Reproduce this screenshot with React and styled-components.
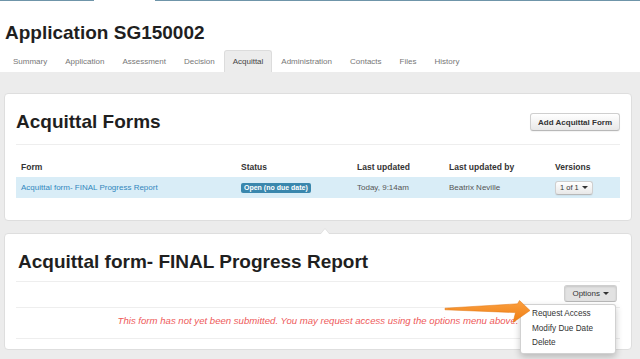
import React from 'react';
import styled, { createGlobalStyle } from 'styled-components';

const tabs = ['Summary', 'Application', 'Assessment', 'Decision', 'Acquittal', 'Administration', 'Contacts', 'Files', 'History'];

const menuItems = ['Request Access', 'Modify Due Date', 'Delete'];

const GlobalStyle = createGlobalStyle`
  html, body {
    margin: 0;
    padding: 0;
    background: #ececec;
    font-family: "Liberation Sans", Arial, sans-serif;
    color: #333;
  }
  * { box-sizing: border-box; }
`;

const Page = styled.div`
  position: relative;
  width: 640px;
  height: 359px;
  overflow: hidden;
  background: #ececec;
`;

const Header = styled.header`
  background: #fff;
`;

const TopRule = styled.div`
  display: flex;
  gap: 61px;
  height: 1px;

  span {
    background: #6f95a9;
  }
  span:first-child { width: 94px; }
  span:last-child { flex: 1; }
`;

const Title = styled.h1`
  margin: 21px 0 0;
  padding-left: 5px;
  font-size: 19px;
  line-height: 22px;
  font-weight: bold;
  color: #1f1f1f;
`;

const TabList = styled.ul`
  display: flex;
  margin: 6px 0 0;
  padding: 0 0 0 4px;
  list-style: none;
  height: 22px;
`;

const Tab = styled.li`
  padding: 0 8px;
  font-size: 8px;
  line-height: 21px;
  color: ${p => (p.$active ? '#444' : '#777')};
  background: ${p => (p.$active ? '#ececec' : 'transparent')};
  border: 1px solid ${p => (p.$active ? '#dcdcdc' : 'transparent')};
  border-bottom: none;
  border-radius: 3px 3px 0 0;
`;

const Panel = styled.section`
  position: relative;
  margin: ${p => p.$top}px 8px 0 4px;
  background: #fff;
  border: 1px solid #dedede;
  border-radius: 4px;
  padding: 17px 11px ${p => p.$bottom}px;

  ${p => p.$notch && `
    &::before {
      content: '';
      position: absolute;
      top: -6px;
      left: 315px;
      border: 5px solid transparent;
      border-top: none;
      border-bottom: 6px solid #dedede;
    }
    &::after {
      content: '';
      position: absolute;
      top: -5px;
      left: 315px;
      border: 5px solid transparent;
      border-top: none;
      border-bottom: 6px solid #fff;
    }
  `}
`;

const PanelHead = styled.div`
  display: flex;
  align-items: center;
  justify-content: space-between;
`;

const Heading = styled.h2`
  margin: 0;
  font-size: 19px;
  line-height: 22px;
  font-weight: bold;
  color: #1f1f1f;
  padding-left: ${p => p.$indent || 0}px;
`;

const Rule = styled.hr`
  margin: ${p => p.$gap}px 0 0;
  border: none;
  border-top: 1px solid #eeeeee;
  height: 0;
`;

const Button = styled.button`
  font-family: inherit;
  font-size: ${p => p.$fs || 8}px;
  font-weight: ${p => (p.$bold ? 'bold' : 'normal')};
  color: #333;
  height: ${p => p.$h}px;
  padding: 0 ${p => p.$px}px;
  border: 1px solid #cfcfcf;
  border-bottom-color: #b8b8b8;
  border-radius: 3px;
  background: ${p => (p.$pressed ? '#e2e2e2' : 'linear-gradient(#ffffff, #e8e8e8)')};
  box-shadow: ${p => (p.$pressed ? 'inset 0 1px 2px rgba(0,0,0,0.12)' : '0 1px 1px rgba(0,0,0,0.05)')};
  display: inline-flex;
  align-items: center;
  gap: 3px;
  cursor: pointer;
`;

const Caret = styled.span`
  display: inline-block;
  border-left: 3px solid transparent;
  border-right: 3px solid transparent;
  border-top: 3px solid #333;
`;

const Table = styled.table`
  width: 100%;
  margin-top: 13px;
  border-collapse: collapse;
  table-layout: fixed;

  th {
    text-align: left;
    font-size: 8.5px;
    font-weight: bold;
    color: #333;
    line-height: 11px;
    padding: 4px 5px 4px;
  }

  td {
    font-size: 8px;
    line-height: 11px;
    padding: 5px 5px;
    color: #555;
    background: #d9edf7;
  }
`;

const VersionCell = styled.td`
  && { padding: 3px 5px; }
`;

const FormLink = styled.a`
  color: #3287bd;
  text-decoration: none;
`;

const Badge = styled.span`
  display: inline-block;
  font-size: 7px;
  font-weight: bold;
  line-height: 10px;
  padding: 0 3px;
  color: #fff;
  background: #3a87ad;
  border-radius: 2px;
`;

const Toolbar = styled.div`
  display: flex;
  justify-content: flex-end;
  margin: 0 3px 0 0;
`;

const MenuWrap = styled.div`
  position: relative;
`;

const Menu = styled.ul`
  position: absolute;
  top: calc(100% + 2px);
  right: 1px;
  width: 96px;
  margin: 0;
  padding: 2px 0;
  list-style: none;
  background: #fff;
  border: 1px solid rgba(0, 0, 0, 0.18);
  border-radius: 3px;
  box-shadow: 0 3px 7px rgba(0, 0, 0, 0.22);
  z-index: 2;
`;

const MenuItem = styled.li`
  padding-left: 11px;
  font-size: 8.2px;
  line-height: 14.5px;
  color: #333;
`;

const Notice = styled.p`
  margin: 7px 0 0;
  text-align: center;
  font-size: 9.6px;
  line-height: 12px;
  font-style: italic;
  color: #ee5a5a;
`;

const Arrow = styled.svg`
  position: absolute;
  left: 440px;
  top: 296px;
  z-index: 3;
`;

export default function App() {
  return (
    <Page>
      <GlobalStyle />
      <Header>
        <TopRule><span /><span /></TopRule>
        <Title>Application SG150002</Title>
        <TabList>
          {tabs.map(t => (
            <Tab key={t} $active={t === 'Acquittal'}>{t}</Tab>
          ))}
        </TabList>
      </Header>

      <Panel $top={21} $bottom={22}>
        <PanelHead>
          <Heading>Acquittal Forms</Heading>
          <Button $bold $h={18} $px={7}>Add Acquittal Form</Button>
        </PanelHead>
        <Rule $gap={11} />
        <Table>
          <colgroup>
            <col style={{ width: 220 }} />
            <col style={{ width: 116 }} />
            <col style={{ width: 92 }} />
            <col style={{ width: 106 }} />
            <col />
          </colgroup>
          <thead>
            <tr>
              <th>Form</th>
              <th>Status</th>
              <th>Last updated</th>
              <th>Last updated by</th>
              <th>Versions</th>
            </tr>
          </thead>
          <tbody>
            <tr>
              <td><FormLink href="#">Acquittal form- FINAL Progress Report</FormLink></td>
              <td><Badge>Open (no due date)</Badge></td>
              <td>Today, 9:14am</td>
              <td>Beatrix Neville</td>
              <VersionCell>
                <Button $h={14} $px={4} $fs={7.5}>1 of 1 <Caret /></Button>
              </VersionCell>
            </tr>
          </tbody>
        </Table>
      </Panel>

      <Panel $top={12} $bottom={10} $notch>
        <Heading $indent={2}>Acquittal form- FINAL Progress Report</Heading>
        <Rule $gap={8} />
        <Toolbar>
          <MenuWrap>
            <Button $pressed $h={17} $px={7}>Options <Caret /></Button>
            <Menu>
              {menuItems.map(m => <MenuItem key={m}>{m}</MenuItem>)}
            </Menu>
          </MenuWrap>
        </Toolbar>
        <Rule $gap={5} />
        <Notice>This form has not yet been submitted. You may request access using the options menu above.</Notice>
        <Rule $gap={11} />
      </Panel>

      <Arrow width="95" height="30" viewBox="440 296 95 30">
        <defs>
          <linearGradient id="arrowFill" x1="0" y1="0" x2="0" y2="1">
            <stop offset="0" stopColor="#fba040" />
            <stop offset="1" stopColor="#ef7d12" />
          </linearGradient>
        </defs>
        <polygon
          points="445,308.2 517.5,303.8 519.5,300.5 530,310.5 513,322.5 515.5,312.6 445,309.8"
          fill="url(#arrowFill)"
          stroke="#e2740e"
          strokeWidth="0.5"
          strokeLinejoin="round"
        />
      </Arrow>
    </Page>
  );
}
